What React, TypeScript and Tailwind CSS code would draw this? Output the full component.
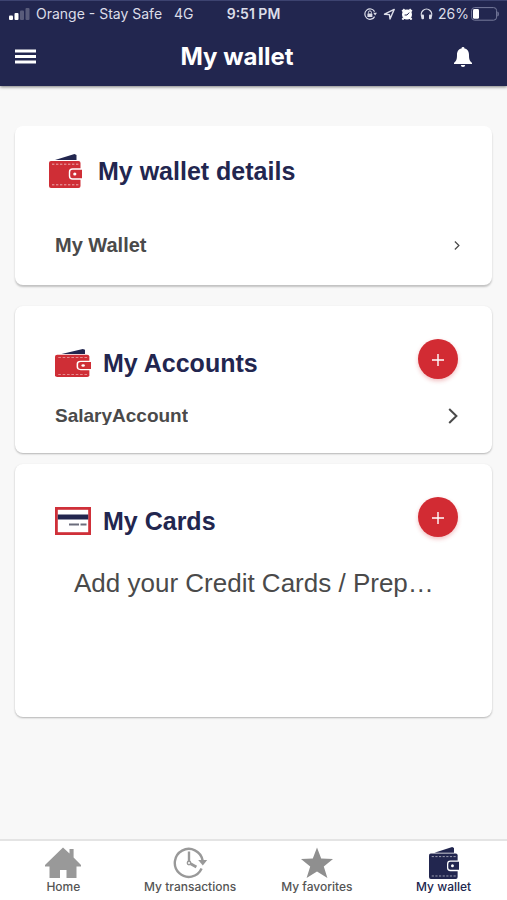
import { ReactNode } from 'react';

interface WalletIconProps {
  className: string;
  color: string;
}

function WalletIcon({ className, color }: WalletIconProps) {
  return (
    <svg className={className} viewBox="0 0 33 34" preserveAspectRatio="none" aria-hidden="true">
      <path d="M6 6 L25.5 0 L27.5 1 V6 Z" fill="#22264f" />
      <rect x="0" y="7" width="31.5" height="27" rx="2" fill={color} />
      <path d="M3 10.2 H30 M3 30.8 H30" stroke="#fff" strokeOpacity="0.6" strokeWidth="1" strokeDasharray="2.4 1.6" />
      <path
        d="M34 15 H23.5 Q20.5 15 20.5 18 V22 Q20.5 25 23.5 25 H34 Z"
        fill={color}
        stroke="#fff"
        strokeWidth="1.4"
      />
      <circle cx="25.8" cy="20" r="1.6" fill="#fff" />
    </svg>
  );
}

function CardIcon() {
  return (
    <svg className="mt-2 h-7 w-9" viewBox="0 0 36 28" aria-hidden="true">
      <rect x="1.4" y="1.4" width="33.2" height="25.2" fill="#fff" stroke="#cf3039" strokeWidth="2.8" />
      <rect x="2.8" y="7.5" width="30.4" height="5" fill="#22264f" />
      <path d="M14 17.5 H24 M25.5 17.5 H31.5" stroke="#6b6d7c" strokeWidth="2" />
    </svg>
  );
}

function Chevron({ className, width }: { className: string; width: number }) {
  return (
    <svg className={className} viewBox="0 0 10 16" fill="none" stroke="#4a4a4a" strokeWidth={width} aria-hidden="true">
      <path d="M1.2 1 L8.4 8 L1.2 15" />
    </svg>
  );
}

function AddButton({ label }: { label: string }) {
  return (
    <button
      type="button"
      aria-label={label}
      className="flex size-10 items-center justify-center rounded-full bg-[#d22b33] shadow-[0_2px_4px_rgba(210,43,51,0.3)]"
    >
      <svg className="mt-0.5 size-3" viewBox="0 0 12 12" stroke="#fff" strokeWidth="1.4" aria-hidden="true">
        <path d="M6 0 V12 M0 6 H12" />
      </svg>
    </button>
  );
}

function StatusBar() {
  return (
    <div className="flex h-7 items-center border-t border-[#3d4370] px-2 pb-0.5 text-sm text-[#dcdde8]">
      <div className="flex flex-1 items-center">
        <svg className="h-3 w-6" viewBox="0 0 24 12" fill="#fff" aria-hidden="true">
          <rect x="1" y="7.5" width="4" height="4.5" rx="1" />
          <rect x="6.5" y="5" width="4" height="7" rx="1" />
          <rect x="12" y="2.5" width="4" height="9.5" rx="1" opacity="0.25" />
          <rect x="17.5" y="0" width="4" height="12" rx="1" opacity="0.25" />
        </svg>
        <span className="ml-1 whitespace-nowrap">Orange - Stay Safe</span>
        <span className="ml-3">4G</span>
      </div>
      <span className="font-semibold">9:51 PM</span>
      <div className="flex flex-1 items-center justify-end">
        <svg className="mr-1 h-3 w-[70px]" viewBox="0 0 70 12" fill="none" stroke="#dcdde8" aria-hidden="true">
          <path d="M10.6 8.6 A5.2 5.2 0 1 1 10.6 3.6" strokeWidth="1.2" />
          <path d="M9.2 4.8 H13 L11.1 7.6 Z" fill="#dcdde8" stroke="none" />
          <rect x="3.4" y="5.4" width="5" height="3.6" rx="0.5" fill="#dcdde8" stroke="none" />
          <path d="M4.4 5.6 V4.4 A1.5 1.5 0 0 1 7.4 4.4 V5.6" />
          <path d="M20.5 6.2 L30.2 1.4 L26 11 L25.4 6.6 Z" strokeWidth="1.4" strokeLinejoin="round" />
          <circle cx="43" cy="6.6" r="5" fill="#fff" stroke="none" />
          <path d="M38.2 3.4 L40.6 1.2 M47.8 3.4 L45.4 1.2 M39.6 10.2 L38.4 11.6 M46.4 10.2 L47.6 11.6" stroke="#fff" strokeWidth="2" />
          <path d="M43 7 L45.2 4.6 M43 7 H40.6" stroke="#22264f" />
          <path d="M58.4 9.5 A5.2 5.2 0 1 1 66.6 9.5" strokeWidth="1.3" />
          <rect x="57.4" y="6.6" width="2.6" height="4.6" rx="1" fill="#dcdde8" stroke="none" />
          <rect x="65" y="6.6" width="2.6" height="4.6" rx="1" fill="#dcdde8" stroke="none" />
        </svg>
        <span>26%</span>
        <svg className="ml-0.5 h-3.5 w-7" viewBox="0 0 28 14" aria-hidden="true">
          <rect x="0.6" y="0.6" width="25" height="12.6" rx="3" fill="none" stroke="#777b9c" strokeWidth="1" />
          <rect x="2" y="2" width="6" height="9.8" rx="1.4" fill="#fff" />
          <path d="M26.8 4.8 Q28.4 7 26.8 9.2 Z" fill="#777b9c" stroke="#777b9c" strokeWidth="0.6" />
        </svg>
      </div>
    </div>
  );
}

interface SectionHeadingProps {
  icon: ReactNode;
  title: string;
  addLabel: string;
}

function SectionHeading({ icon, title, addLabel }: SectionHeadingProps) {
  return (
    <div className="flex items-center">
      {icon}
      <h2 className="ml-3 flex-1 pt-2 text-[25px] leading-8 font-bold text-[#22264f]">{title}</h2>
      <AddButton label={addLabel} />
    </div>
  );
}

const tabs = [
  {
    label: 'Home',
    icon: (
      <svg className="h-8 w-9" viewBox="0 0 36 32" fill="#999" aria-hidden="true">
        <path d="M18 0.5 L24.5 6.6 V2 H28.6 V10.6 L36 18 V19.5 H31.5 V31 H21.5 V23 H15 V31 H4.5 V19.5 H0 V18 Z" />
      </svg>
    ),
  },
  {
    label: 'My transactions',
    icon: (
      <svg className="h-8 w-9" viewBox="0 0 36 32" fill="none" stroke="#999" strokeWidth="2.4" aria-hidden="true">
        <path d="M29.6 21.6 A14 14 0 1 1 30.6 13.5" />
        <path d="M26.2 13 H35.2 L30.8 18.6 Z" fill="#999" stroke="none" />
        <path d="M17 4.5 V14.5" />
        <path d="M18.6 16.8 L24.4 20" strokeWidth="2.8" />
        <circle cx="17" cy="16" r="1.7" strokeWidth="1.4" />
      </svg>
    ),
  },
  {
    label: 'My favorites',
    icon: (
      <svg className="h-8 w-9" viewBox="0 0 36 32" fill="#8f8f8f" aria-hidden="true">
        <path d="M18 0.5 L22.2 11.4 L34 12 L24.8 19.6 L28.4 31 L18 24.6 L7.6 31 L11.2 19.6 L2 12 L13.8 11.4 Z" />
      </svg>
    ),
  },
  {
    label: 'My wallet',
    active: true,
    icon: <WalletIcon className="h-8 w-[30px]" color="#22264f" />,
  },
];

export default function App() {
  return (
    <div className="flex min-h-screen flex-col bg-[#f8f8f8] font-['Liberation_Sans',Arial,sans-serif]">
      <header className="bg-[#22264f] font-[Inter,sans-serif] shadow-[0_1px_3px_rgba(0,0,0,0.5)]">
        <StatusBar />
        <div className="flex h-[58px] items-center pr-[35px] pl-[15px]">
          <button type="button" aria-label="Menu">
            <svg className="h-4 w-[21px]" viewBox="0 0 21 16" stroke="#fff" strokeWidth="3" aria-hidden="true">
              <path d="M0 2 H21 M0 7.5 H21 M0 13 H21" />
            </svg>
          </button>
          <h1 className="mr-4 flex-1 text-center text-2xl font-bold text-white">My wallet</h1>
          <button type="button" aria-label="Notifications">
            <svg className="h-5 w-[18px]" viewBox="0 0 18 20" fill="#fff" aria-hidden="true">
              <path d="M9 0 A1.5 1.5 0 0 1 10.5 1.6 C13.8 2.3 15 5 15 8 C15 12.5 15.8 14.2 18 15.8 V17 H0 V15.8 C2.2 14.2 3 12.5 3 8 C3 5 4.2 2.3 7.5 1.6 A1.5 1.5 0 0 1 9 0 Z" />
              <path d="M6.8 18 H11.2 A2.2 2 0 0 1 6.8 18 Z" />
            </svg>
          </button>
        </div>
      </header>

      <main className="flex-1 px-[15px] pt-10">
        {/* Wallet details */}
        <section className="rounded-lg bg-white pt-7 pr-8 pb-[27px] pl-[34px] shadow-[0_2px_2px_rgba(0,0,0,0.22)]">
          <div className="flex items-center">
            <WalletIcon className="h-[34px] w-[33px]" color="#cf2e36" />
            <h2 className="ml-4 text-[25px] leading-8 font-bold text-[#22264f]">My wallet details</h2>
          </div>
          <a href="#wallet" className="mt-11 flex items-center justify-between pl-1.5 text-xl leading-[26px] font-bold text-[#4a4a4a]">
            My Wallet
            <Chevron className="h-[9px] w-1.5" width={2.2} />
          </a>
        </section>

        {/* Accounts */}
        <section className="mt-[21px] rounded-lg bg-white pt-[33px] pr-[34px] pb-7 pl-10 shadow-[0_1px_2px_rgba(0,0,0,0.28)]">
          <SectionHeading
            icon={<WalletIcon className="mt-2 h-7 w-9" color="#cf2e36" />}
            title="My Accounts"
            addLabel="Add account"
          />
          {/* tight line box, trims the descender of the account name */}
          <a href="#salary" className="mt-7 flex items-center justify-between text-[19px] font-bold text-[#4a4a4a]">
            <span className="overflow-hidden leading-[18px]">SalaryAccount</span>
            <Chevron className="h-4 w-2.5" width={2} />
          </a>
        </section>

        {/* Cards */}
        <section className="mt-[11px] min-h-[253px] rounded-lg bg-white pt-[33px] pr-[34px] pl-10 shadow-[0_1px_2px_rgba(0,0,0,0.28)]">
          <SectionHeading icon={<CardIcon />} title="My Cards" addLabel="Add card" />
          <p className="mt-7 truncate pl-[19px] text-[26px] leading-9 text-[#4a4a4a]">
            Add your Credit Cards / Prep…
          </p>
        </section>
      </main>

      <nav className="grid grid-cols-4 border-t-2 border-[#e4e4e4] bg-white pt-1.5 pb-[5px] font-[Inter,sans-serif]">
        {tabs.map((tab) => (
          <a key={tab.label} href="#tab" className="flex flex-col items-center">
            {tab.icon}
            <span
              className={
                tab.active
                  ? 'text-xs font-medium whitespace-nowrap text-[#22264f]'
                  : 'text-xs font-medium whitespace-nowrap text-[#555]'
              }
            >
              {tab.label}
            </span>
          </a>
        ))}
      </nav>
    </div>
  );
}
